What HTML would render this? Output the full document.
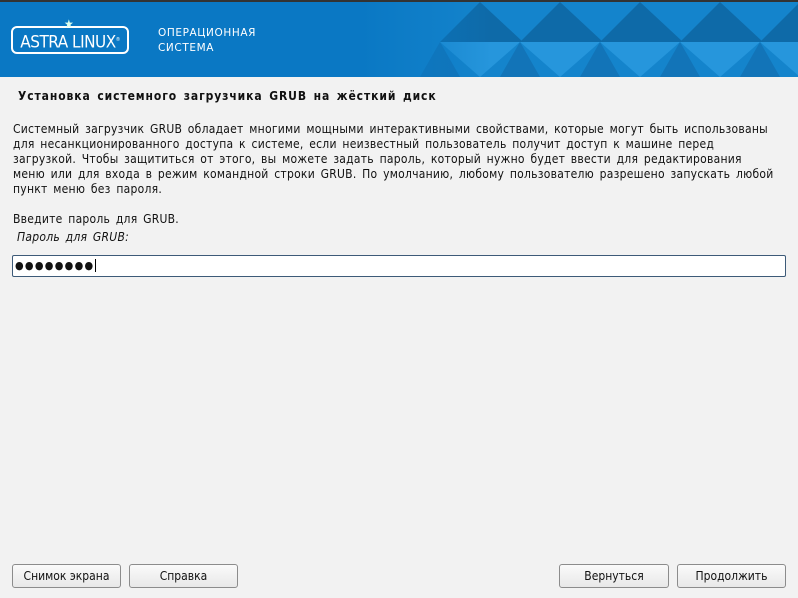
<!DOCTYPE html>
<html><head><meta charset="utf-8"><style>
body{margin:0;width:798px;height:598px;background:#f2f2f2;font-family:"DejaVu Sans Condensed","DejaVu Sans","Liberation Sans",sans-serif;font-size:12px;color:#111;position:relative;overflow:hidden}
.hdr{position:absolute;left:0;top:0;width:798px;height:77px;background:#0a78c4;border-top:2px solid #333;box-sizing:border-box}
.logo{position:absolute;left:11px;top:24px;width:118px;height:28px;border:2px solid #fff;border-radius:6px;box-sizing:border-box;color:#fff;font-family:"DejaVu Sans Condensed","Liberation Sans",sans-serif;font-size:17px;line-height:24px;text-align:center;white-space:nowrap;letter-spacing:-0.5px}
.sub{position:absolute;left:158px;top:24px;color:#fff;font-size:10.5px;line-height:15px;letter-spacing:0.6px;font-family:"DejaVu Sans",sans-serif}
.t{position:absolute;left:18px;top:89px;font-weight:bold;letter-spacing:0.9px;word-spacing:2px;white-space:nowrap}
.p{position:absolute;left:13px;top:122px;line-height:15px;width:780px;white-space:nowrap;letter-spacing:0.25px;word-spacing:2px}
.inp{position:absolute;left:12px;top:255px;width:774px;height:22px;border:1px solid #3d5a78;border-radius:2px;background:#fff;box-sizing:border-box;font-size:11px;line-height:19px;padding-left:2px;letter-spacing:1.3px}
.b{position:absolute;top:564px;height:24px;border:1px solid #8c8c8c;border-radius:3px;background:linear-gradient(#fafafa,#e8e8e8);box-sizing:border-box;text-align:center;line-height:22px;font-size:12px}
</style></head><body>
<div class="hdr">
<svg style="position:absolute;left:360px;top:0" width="438" height="75" viewBox="0 0 438 75">
<defs><linearGradient id="fade" x1="0" x2="1"><stop offset="0" stop-color="#0a78c4" stop-opacity="1"/><stop offset="0.3" stop-color="#0a78c4" stop-opacity="0"/></linearGradient></defs>
<rect width="438" height="75" fill="#1484cc"/>
<g id="c">
<polygon points="120,75 80,40 160,40" fill="#2696dc"/>
<polygon points="80,40 120,0 163,40" fill="#0e6aa8"/>
<polygon points="80,40 100,75 60,75" fill="#1274b8"/>
</g>
<use href="#c" x="80"/><use href="#c" x="160"/><use href="#c" x="240"/><use href="#c" x="320"/>
<rect width="438" height="75" fill="url(#fade)"/>
</svg>
<div class="logo">ASTRA LINUX<sup style="font-size:5px">®</sup></div>
<div style="position:absolute;left:64px;top:15px;color:#dfe;font-size:12px">★</div>
<div class="sub">ОПЕРАЦИОННАЯ<br>СИСТЕМА</div>
</div>
<div class="t">Установка системного загрузчика GRUB на жёсткий диск</div>
<div class="p">Системный загрузчик GRUB обладает многими мощными интерактивными свойствами, которые могут быть использованы<br>для несанкционированного доступа к системе, если неизвестный пользователь получит доступ к машине перед<br>загрузкой. Чтобы защититься от этого, вы можете задать пароль, который нужно будет ввести для редактирования<br>меню или для входа в режим командной строки GRUB. По умолчанию, любому пользователю разрешено запускать любой<br>пункт меню без пароля.<br><br>Введите пароль для GRUB.<br><i style="margin-left:4px;line-height:20px">Пароль для GRUB:</i></div>
<div class="inp">●●●●●●●●<span style="border-left:1px solid #000;margin-left:0px"></span></div>
<div class="b" style="left:12px;width:109px">Снимок экрана</div>
<div class="b" style="left:129px;width:109px">Справка</div>
<div class="b" style="left:559px;width:110px">Вернуться</div>
<div class="b" style="left:677px;width:109px">Продолжить</div>
</body></html>
